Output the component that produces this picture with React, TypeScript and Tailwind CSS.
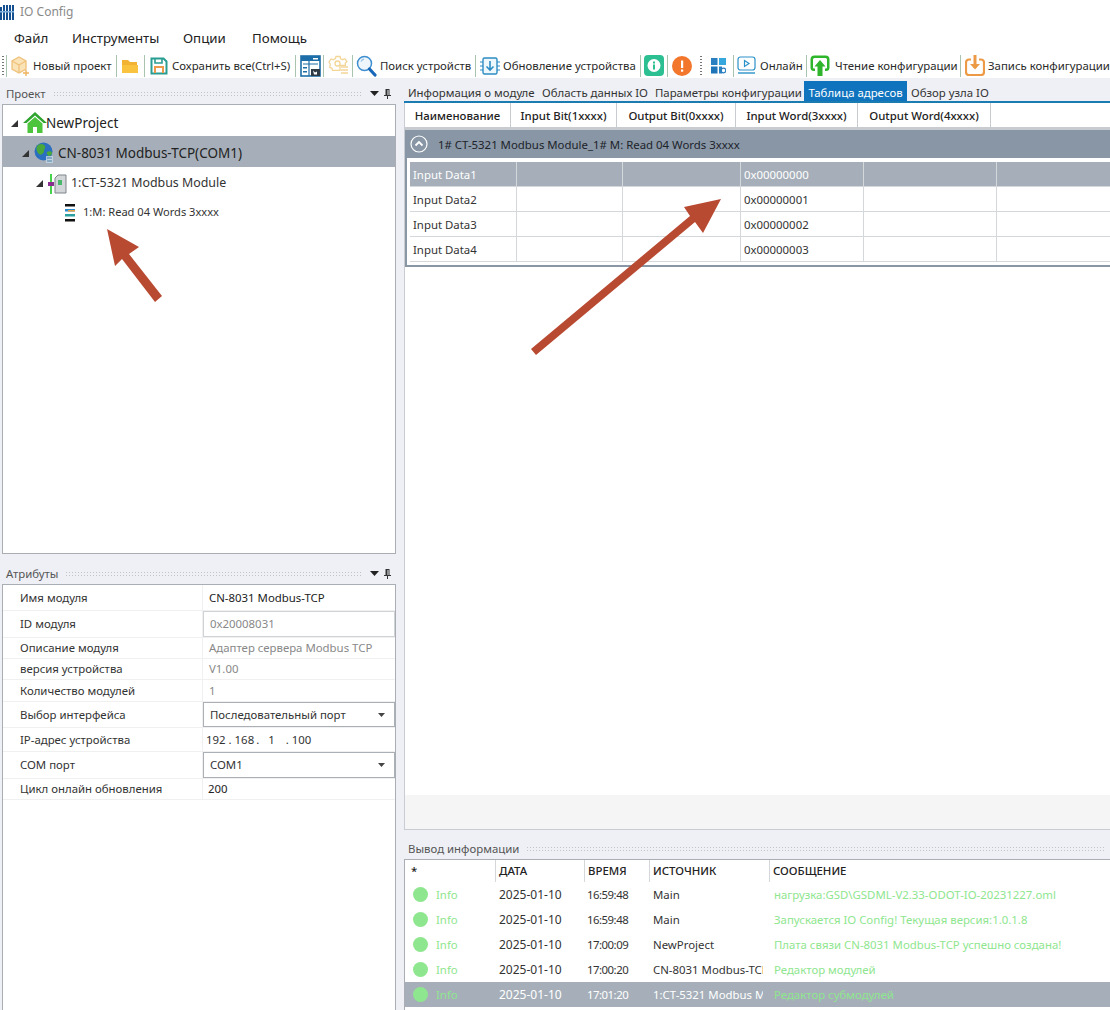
import React from "react";

const Sep = ({ className = "" }: { className?: string }) => <div className={`w-px h-[22px] bg-[#a9c4ae] shrink-0 ${className}`} />;

const Label = ({ children, className = "" }: { children: React.ReactNode; className?: string }) => (
  <span className={`whitespace-nowrap text-[#2a2a2a] shrink-0 ${className}`}>{children}</span>
);

const Cube = () => (
  <svg width="20" height="22" viewBox="0 0 20 22" className="shrink-0 ml-[3px]" fill="none">
    <path d="M9 2l7 4v8l-7 4-7-4V6z" fill="#fbe3b8" stroke="#efc27c" strokeWidth="1.3" />
    <path d="M2 6l7 4 7-4M9 10v8" stroke="#efc27c" strokeWidth="1.3" />
    <path d="M16 15v6M13 18h6" stroke="#eeb35f" strokeWidth="1.4" />
  </svg>
);
const Folder = () => (
  <svg width="18" height="16" viewBox="0 0 18 16" className="shrink-0 ml-[4px]">
    <path d="M1 2h6l2 2h7v3H1z" fill="#f2b233" />
    <path d="M1 7h16v8H1z" fill="#f9c23f" />
  </svg>
);
const Save = () => (
  <svg width="18" height="20" viewBox="0 0 18 20" className="shrink-0 ml-[5px]" fill="none">
    <path d="M1.500 2.500h12l3 3v12h-15z" stroke="#2a9d93" strokeWidth="2" fill="#fff" />
    <path d="M5 3v4h7V3" stroke="#2a9d93" strokeWidth="1.6" />
    <path d="M5 17v-6h8v6" stroke="#ee9a4d" strokeWidth="2" />
  </svg>
);
const PanelIcon = () => (
  <svg width="21" height="22" viewBox="0 0 21 22" className="shrink-0 ml-[4px]">
    <rect x="1" y="1" width="19" height="20" fill="#fff" stroke="#1d6ea8" strokeWidth="1.600" />
    <rect x="1" y="1" width="19" height="5" fill="#1d6ea8" />
    <rect x="13" y="3" width="5" height="1.500" fill="#fff" />
    <path d="M3 9h15M9 6v15" stroke="#1d6ea8" strokeWidth="1.200" />
    <path d="M3 12h4v1.500H3zM3 16h4v1.500H3z" fill="#1d6ea8" />
    <rect x="11" y="14" width="9" height="7" fill="#2e3b46" />
    <path d="M13 15.500l2 2 2-1v3h-3" fill="#fff" />
  </svg>
);
const Gear = () => (
  <svg width="21" height="21" viewBox="0 0 21 21" className="shrink-0 ml-[4px]" fill="none" stroke="#f3d597" strokeWidth="1.300">
    <path d="M8 1.500h4l.6 2.300 2.100.9 2.200-1 2 2.800-1.700 1.800.2 2H12v5H4.500l-.6-2-2.200-1 .6-3L1 7l2-3 2.300.7L7.400 3.500z" />
    <circle cx="9.500" cy="8.500" r="2.500" />
    <path d="M13 12h7M13 15h7M13 18h7" />
  </svg>
);
const Search = () => (
  <svg width="21" height="22" viewBox="0 0 21 22" className="shrink-0 ml-[3px]" fill="none">
    <circle cx="8.500" cy="8.500" r="7" stroke="#3f8fd0" strokeWidth="1.500" fill="#eef6fc" />
    <path d="M5 6.500a4.500 4.500 0 013-2.500" stroke="#9cc6e8" strokeWidth="1.300" />
    <path d="M13.500 14l5.500 6" stroke="#1867b8" strokeWidth="3.200" strokeLinecap="round" />
  </svg>
);
const Chip = () => (
  <svg width="20" height="20" viewBox="0 0 20 20" className="shrink-0 ml-[4px]" fill="none" stroke="#2d8cc4">
    <rect x="3" y="2" width="14" height="16" rx="1.500" strokeWidth="1.400" fill="#eef7fc" />
    <path d="M0 6h3M0 10h3M0 14h3M17 6h3M17 10h3M17 14h3" strokeWidth="1.200" />
    <path d="M10 5v9M6.500 10.500L10 14l3.500-3.500" strokeWidth="1.600" />
  </svg>
);
const InfoI = () => (
  <svg width="20" height="21" viewBox="0 0 20 21" className="shrink-0 ml-[3px]">
    <rect width="20" height="21" rx="4" fill="#2cbf92" />
    <circle cx="10" cy="10.500" r="6.500" fill="#fff" />
    <rect x="9" y="9.500" width="2" height="5" fill="#2cbf92" />
    <rect x="9" y="6.500" width="2" height="2" fill="#2cbf92" />
  </svg>
);
const Warn = () => (
  <svg width="20" height="20" viewBox="0 0 20 20" className="shrink-0 ml-[4px]">
    <circle cx="10" cy="10" r="10" fill="#f2762c" />
    <rect x="9" y="4.500" width="2.200" height="7.500" fill="#fff" />
    <rect x="9" y="13.500" width="2.200" height="2.200" fill="#fff" />
  </svg>
);
const Blocks = () => (
  <svg width="15" height="16" viewBox="0 0 15 16" className="shrink-0 ml-[9px]">
    <rect x="0" y="0" width="6.500" height="7" fill="#2a7fc0" />
    <rect x="8" y="0" width="7" height="7" fill="#35a7dc" />
    <rect x="0" y="8.500" width="6.500" height="7" fill="#1f75b8" />
    <rect x="8" y="8.500" width="3" height="7" fill="#2a7fc0" />
    <circle cx="12.500" cy="12.500" r="2.300" fill="none" stroke="#2a7fc0" strokeWidth="1.200" />
  </svg>
);
const Play = () => (
  <svg width="19" height="20" viewBox="0 0 19 20" className="shrink-0 ml-[3px]" fill="none" stroke="#2b91c9">
    <rect x="1" y="1" width="17" height="13" rx="2.500" strokeWidth="1.200" />
    <path d="M7.500 4.500l4.500 3-4.500 3z" strokeWidth="1.200" />
    <path d="M1 17h17" strokeWidth="1.400" />
  </svg>
);
const Up = () => (
  <svg width="20" height="21" viewBox="0 0 20 21" className="shrink-0 ml-[3px]">
    <path d="M5 16H4a3.500 3.500 0 01-3.500-3.500v-8A4 4 0 014.500.5h11a4 4 0 014 4v8A3.500 3.500 0 0116 16h-1v-2.500h1a1 1 0 001-1v-8a1.500 1.500 0 00-1.500-1.500h-11A1.500 1.500 0 003 4.500v8a1 1 0 001 1h1z" fill="#2fb52c" />
    <path d="M10 5l5.500 6.500H12.500V21h-5v-9.500H4.500z" fill="#2fb52c" />
  </svg>
);
const Down = () => (
  <svg width="20" height="21" viewBox="0 0 20 21" className="shrink-0 ml-[4px]" fill="none">
    <path d="M6 4.500H4A3 3 0 001 7.500v9.500a3 3 0 003 3h12a3 3 0 003-3V7.500a3 3 0 00-3-3h-2" stroke="#ec9a45" strokeWidth="2.200" />
    <path d="M10 0v13" stroke="#ec9a45" strokeWidth="3" />
    <path d="M5 9l5 5.500L15 9z" fill="#ec9a45" />
  </svg>
);

const Expander = ({ className }: { className: string }) => (
  <svg width="9" height="9" viewBox="0 0 9 9" className={`shrink-0 ${className}`}>
    <path d="M8 1v7H1z" fill="#333" />
  </svg>
);

const Dots = () => (
  <div className="flex-1 h-[6px] bg-[radial-gradient(#bfc3cb_0.8px,transparent_0.9px)] bg-[length:3px_3px]" />
);

const PanelHead = ({ title, tools = true }: { title: string; tools?: boolean }) => (
  <div className="flex items-center h-[22px] pl-[4px] pr-[5px] pt-[1px] text-[#555] gap-[7px] shrink-0">
    <span className="whitespace-nowrap">{title}</span>
    <Dots />
    {tools && (
      <div className="flex items-center gap-[5px]">
        <svg width="9" height="5" viewBox="0 0 9 5"><path d="M0 0h9L4.500 5z" fill="#222" /></svg>
        <svg width="7" height="10" viewBox="0 0 7 10"><path d="M1.500 0h4v6h1.500v1H4v3H3V7H0V6h1.500z" fill="#333" /><rect x="3.500" y="1" width="1" height="5" fill="#eef0f5" /></svg>
      </div>
    )}
  </div>
);

const Attr = ({ label, className, children }: { label: string; className: string; children: React.ReactNode }) => (
  <div className={`flex border-b border-[#f0f0f0] ${className}`}>
    <div className="w-[200px] pl-[17px] flex items-center border-r border-[#f0f0f0] text-[#333] shrink-0">{label}</div>
    <div className="flex-1 flex items-center min-w-0">{children}</div>
  </div>
);

const Select = ({ value }: { value: string }) => (
  <div className="w-full h-full flex items-center justify-between pl-[6px] pr-[9px] border border-[#aab0b6] text-[#333]">
    <span>{value}</span>
    <svg width="7" height="4" viewBox="0 0 7 4"><path d="M0 0h7L3.500 4z" fill="#444" /></svg>
  </div>
);

const addrCols = ["w-[107px]", "w-[106px]", "w-[118px]", "w-[123px]", "w-[133px]", "flex-1"];
const addrRows = ["0x00000000", "0x00000001", "0x00000002", "0x00000003"];

const logRows = [
  ["16:59:48", "Main", "нагрузка:GSD\\GSDML-V2.33-ODOT-IO-20231227.oml"],
  ["16:59:48", "Main", "Запускается IO Config! Текущая версия:1.0.1.8"],
  ["17:00:09", "NewProject", "Плата связи CN-8031 Modbus-TCP успешно создана!"],
  ["17:00:20", "CN-8031 Modbus-TCP", "Редактор модулей"],
  ["17:01:20", "1:CT-5321 Modbus Module", "Редактор субмодулей"],
];

export default function App() {
  return (
    <div className="relative w-[1110px] h-[1010px] overflow-hidden bg-[#eef0f5] text-[11.400px] text-[#222] [font-family:'Noto_Sans',sans-serif]">
      {/* title */}
      <div className="h-[24px] bg-white flex items-center gap-[6px] text-[12px]">
        <svg width="14" height="16" viewBox="0 0 14 16" className="shrink-0">
          <path d="M0 3h2v13H0zM3 1h2v15H3zM6 1h2v15H6zM9 1h2v15H9zM12 1h2v15h-2z" fill="#14508f" />
          <path d="M0 7h14v1.500H0z" fill="#7fb0dc" />
        </svg>
        <span className="text-[#8a8a8a]">IO Config</span>
      </div>
      {/* menu */}
      <div className="h-[28px] bg-white flex items-center text-[13.300px] text-[#222] pl-[14px] pt-[1px]">
        <span className="w-[58px]">Файл</span>
        <span className="w-[111px]">Инструменты</span>
        <span className="w-[69px]">Опции</span>
        <span>Помощь</span>
      </div>
      {/* toolbar */}
      <div className="h-[26px] bg-white flex items-center pl-[2px] pt-[1px]">
        <div className="w-[2px] h-[22px] bg-[radial-gradient(#777_0.7px,transparent_0.8px)] bg-[length:2px_3px] shrink-0" />
        <Sep className="ml-[2px]" />
        <Cube />
        <Label className="ml-[3px] w-[83px]">Новый проект</Label>
        <Sep />
        <Folder />
        <Sep className="ml-[5px]" />
        <Save />
        <Label className="ml-[4px] w-[123px]">Сохранить все(Ctrl+S)</Label>
        <Sep />
        <PanelIcon />
        <Sep className="ml-[2px]" />
        <Gear />
        <Sep className="ml-[3px]" />
        <Search />
        <Label className="ml-[3px] w-[95px]">Поиск устройств</Label>
        <Sep />
        <Chip />
        <Label className="ml-[3px] w-[137px]">Обновление устройства</Label>
        <Sep />
        <InfoI />
        <Sep className="ml-[3px]" />
        <Warn />
        <div className="w-[2px] h-[22px] ml-[8px] bg-[radial-gradient(#777_0.7px,transparent_0.8px)] bg-[length:2px_3px] shrink-0" />
        <Blocks />
        <Sep className="ml-[7px]" />
        <Play />
        <Label className="ml-[4px] w-[46px]">Онлайн</Label>
        <Sep />
        <Up />
        <Label className="ml-[5px] w-[125px]">Чтение конфигурации</Label>
        <Sep />
        <Down />
        <Label className="ml-[3px]">Запись конфигурации</Label>
      </div>

      {/* main */}
      <div className="flex h-[932px]">
        {/* left */}
        <div className="w-[404px] shrink-0 pl-[2px] pr-[8px] pt-[4px] flex flex-col">
          <PanelHead title="Проект" />
          <div className="h-[450px] bg-white border border-[#a9aeb5] pt-[5px] shrink-0">
            <div className="flex items-center h-[26px] pl-[7px]">
              <Expander className="mr-[4px]" />
              <svg width="24" height="22" viewBox="0 0 24 22" className="shrink-0">
                <path d="M12 0l12 11h-3.500L12 3.500 3.500 11H0z" fill="#2fa32f" />
                <path d="M4.500 11.500L12 5l7.500 6.500V21H14v-6h-4v6H4.500z" fill="#4cc43c" />
              </svg>
              <span className="ml-[-1px] text-[13.500px] text-[#222]">NewProject</span>
            </div>
            <div className="flex items-center h-[31px] pl-[18px] pt-[3px] bg-[#a6afb9]">
              <Expander className="mr-[4px]" />
              <svg width="21" height="22" viewBox="0 0 21 22" className="shrink-0">
                <circle cx="9.500" cy="9.500" r="9" fill="#2a6fc0" />
                <path d="M4 3c3-2 6-1 7 1s-1 3-1 5-3 5-5 3-4-6-1-9zM13 10c2-1 5-1 5 1s-2 3-3 3-3-3-2-4z" fill="#4aa83a" />
                <path d="M12 14h7v7h-7z" fill="#c7dbe9" opacity="0.8" />
                <path d="M13 16h5M13 19h5" stroke="#4f7fa8" strokeWidth="1.200" />
              </svg>
              <span className="ml-[3px] text-[13.500px] text-[#222]">CN-8031 Modbus-TCP(COM1)</span>
            </div>
            <div className="flex items-center h-[31px] pl-[32px] pt-[2px]">
              <Expander className="mr-[4px]" />
              <svg width="20" height="20" viewBox="0 0 20 20" className="shrink-0">
                <rect x="2" y="0" width="2" height="20" fill="#46d24a" />
                <rect x="0" y="8" width="6" height="4" fill="#8a2f8f" />
                <path d="M7 4l3-3h8v18H7z" fill="#d3d6d8" stroke="#7f858a" />
                <rect x="10" y="6" width="4" height="5" fill="#49b86b" />
              </svg>
              <span className="ml-[3px] text-[12.400px] text-[#333]">1:CT-5321 Modbus Module</span>
            </div>
            <div className="flex items-center h-[28px] pl-[62px] pt-[1px]">
              <svg width="11" height="18" viewBox="0 0 11 18" className="shrink-0">
                <rect x="0" y="0" width="10" height="2.500" fill="#111" />
                <rect x="0" y="5" width="10" height="2.500" fill="#2a8ad0" />
                <rect x="3" y="6" width="7" height="1.500" fill="#e3a23d" />
                <rect x="0" y="10" width="10" height="2.500" fill="#2aa0a0" />
                <rect x="0" y="15" width="10" height="2.500" fill="#111" />
              </svg>
              <span className="ml-[7px] text-[11.100px] text-[#333]">1:M: Read 04 Words 3xxxx</span>
            </div>
          </div>
          <div className="h-[8px] shrink-0" />
          <PanelHead title="Атрибуты" />
          <div className="flex-1 bg-white border border-[#a9aeb5] border-b-0">
            <Attr label="Имя модуля" className="h-[26px]"><span className="pl-[6px]">CN-8031 Modbus-TCP</span></Attr>
            <Attr label="ID модуля" className="h-[27px]">
              <div className="w-full h-full flex items-center pl-[6px] border border-[#d0d3d6] text-[#888]">0x20008031</div>
            </Attr>
            <Attr label="Описание модуля" className="h-[21px]"><span className="pl-[6px] text-[#888] whitespace-nowrap">Адаптер сервера Modbus TCP</span></Attr>
            <Attr label="версия устройства" className="h-[21px]"><span className="pl-[6px] text-[#888]">V1.00</span></Attr>
            <Attr label="Количество модулей" className="h-[22px]"><span className="pl-[6px] text-[#888]">1</span></Attr>
            <Attr label="Выбор интерфейса" className="h-[26px]"><Select value="Последовательный порт" /></Attr>
            <Attr label="IP-адрес устройства" className="h-[24px]">
              <div className="flex pl-[3px] text-[#333]">
                <span>192</span>
                <span className="ml-[3px]">.</span>
                <span className="ml-[3px]">168</span>
                <span className="ml-[2px]">.</span>
                <span className="ml-[9px]">1</span>
                <span className="ml-[11px]">.</span>
                <span className="ml-[3px]">100</span>
              </div>
            </Attr>
            <Attr label="COM порт" className="h-[27px]"><Select value="COM1" /></Attr>
            <Attr label="Цикл онлайн обновления" className="h-[21px]"><span className="pl-[5px]">200</span></Attr>
          </div>
        </div>

        {/* right */}
        <div className="flex-1 min-w-0 flex flex-col pt-[3px]">
          <div className="h-[20px] flex items-stretch border-b-2 border-[#1b7cb2] box-content shrink-0 pl-[4px] text-[#333] whitespace-nowrap">
            <div className="w-[134px] flex items-center pt-[3px]">Информация о модуле</div>
            <div className="w-[113px] flex items-center pt-[3px]">Область данных IO</div>
            <div className="w-[149px] flex items-center pt-[3px]">Параметры конфигурации</div>
            <div className="w-[103px] flex items-center justify-center pt-[3px] bg-[#0f73be] text-white">Таблица адресов</div>
            <div className="flex items-center pl-[4px] pt-[3px]">Обзор узла IO</div>
          </div>
          <div className="h-[692px] bg-white border-l border-[#c9cdd3] shrink-0">
            <div className="h-[24px] flex items-stretch border-b-[3px] border-[#c8ccd0] box-content font-medium text-[#222] whitespace-nowrap">
              <div className="w-[106px] flex items-center justify-center pt-[1px] border-r border-[#c8ccd0]">Наименование</div>
              <div className="w-[106px] flex items-center justify-center pt-[1px] border-r border-[#c8ccd0]">Input Bit(1xxxx)</div>
              <div className="w-[119px] flex items-center justify-center pt-[1px] border-r border-[#c8ccd0]">Output Bit(0xxxx)</div>
              <div className="w-[122px] flex items-center justify-center pt-[1px] border-r border-[#c8ccd0]">Input Word(3xxxx)</div>
              <div className="w-[133px] flex items-center justify-center pt-[1px] border-r border-[#c8ccd0]">Output Word(4xxxx)</div>
            </div>
            <div className="h-[137px] border-[2px] border-r-0 border-t-0 border-[#8896a5] flex flex-col">
              <div className="h-[28px] bg-[#8896a5] flex items-center pl-[3px] gap-[10px] shrink-0 text-[#1d232a]">
                <svg width="18" height="18" viewBox="0 0 18 18" className="shrink-0" fill="none" stroke="#fff">
                  <circle cx="9" cy="9" r="8" strokeWidth="1.200" />
                  <path d="M5.500 10.500L9 7l3.500 3.500" strokeWidth="1.800" />
                </svg>
                <span className="whitespace-nowrap pt-[1px]">1# CT-5321 Modbus Module_1# M: Read 04 Words 3xxxx</span>
              </div>
              <div className="pl-[3px] pt-[4px]">
                {addrRows.map((addr, i) => (
                  <div key={addr} className={`flex h-[25px] border-b border-[#d5d8db] ${i === 0 ? "bg-[#a6afb9] text-white" : "text-[#333]"}`}>
                    {addrCols.map((c, j) => (
                      <div key={j} className={`${c} flex items-center pl-[3px] pt-[1px] ${j < 5 ? "border-r border-[#d5d8db]" : ""}`}>
                        {j === 0 ? `Input Data${i + 1}` : j === 3 ? addr : ""}
                      </div>
                    ))}
                  </div>
                ))}
              </div>
            </div>
          </div>
          <div className="h-[35px] bg-[#f5f5f6] border-l border-b border-[#c9cdd3] shrink-0" />
          <div className="h-[7px] shrink-0" />
          <PanelHead title="Вывод информации" tools={false} />
          <div className="flex-1 bg-white border border-r-0 border-b-0 border-[#a9aeb5] overflow-hidden">
            <div className="flex h-[22px] items-center font-medium text-[#222]">
              <div className="w-[91px] pl-[6px] h-full flex items-center border-r border-[#d5d8db]">*</div>
              <div className="w-[89px] pl-[3px] h-full flex items-center border-r border-[#d5d8db]">ДАТА</div>
              <div className="w-[65px] pl-[3px] h-full flex items-center border-r border-[#d5d8db]">ВРЕМЯ</div>
              <div className="w-[120px] pl-[3px] h-full flex items-center border-r border-[#d5d8db]">ИСТОЧНИК</div>
              <div className="pl-[3px]">СООБЩЕНИЕ</div>
            </div>
            {logRows.map((r, i) => (
              <div key={i} className={`flex h-[25px] items-center whitespace-nowrap ${i === 4 ? "bg-[#a6afb9] text-white" : "text-[#333]"}`}>
                <div className="w-[91px] shrink-0 pl-[8px] flex items-center gap-[8px]">
                  <div className="w-[15px] h-[15px] rounded-full bg-[#8ee68e] shrink-0" />
                  <span className="text-[#8ee68e]">Info</span>
                </div>
                <div className="w-[88px] shrink-0 pl-[3px] text-[12px]">2025-01-10</div>
                <div className="w-[66px] shrink-0 pl-[3px] tracking-[-0.5px]">{r[0]}</div>
                <div className="w-[110px] ml-[3px] mr-[7px] shrink-0 overflow-hidden">{r[1]}</div>
                <div className="pl-[4px] text-[#8ee68e]">{r[2]}</div>
              </div>
            ))}
          </div>
        </div>
      </div>

      {/* annotation arrows over the screenshot */}
      <svg width="1110" height="1010" viewBox="0 0 1110 1010" className="absolute top-0 left-0 pointer-events-none">
        <path d="M107 229L139 247L129 254L162 296L155 302L122 259L115 266z" fill="#b94a32" />
        <path d="M721 199L703 233L695 222L536 355L531 349L690 216L684 207z" fill="#b94a32" />
      </svg>
    </div>
  );
}
